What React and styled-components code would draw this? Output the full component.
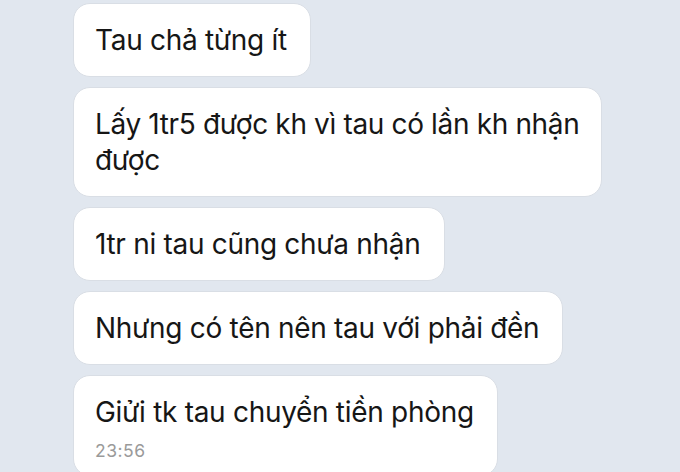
import React from "react";
import styled, { createGlobalStyle } from "styled-components";

const Global = createGlobalStyle`
  html, body {
    margin: 0;
    padding: 0;
    height: 472px;
    overflow: hidden;
    background: #e1e7ef;
  }
  * { box-sizing: border-box; }
`;

const Thread = styled.div`
  display: flex;
  flex-direction: column;
  align-items: flex-start;
  gap: 10px;
  padding: 3px 0 0 73px;
  font-family: Inter, "Noto Sans", sans-serif;
`;

const Bubble = styled.div`
  background: #ffffff;
  border: 1px solid #d9dee5;
  border-radius: 17px;
  padding: 18px 23px 18px 21px;
  max-width: 529px;
  color: #161616;
  font-size: 28px;
  line-height: 36px;
  letter-spacing: -0.3px;
  padding-right: ${(p) => (p.$wide ? "20px" : "23px")};
  letter-spacing: ${(p) => (p.$wide ? "-0.35px" : "-0.3px")};
  padding-bottom: ${(p) => (p.$withTime ? "12px" : "18px")};
`;

const Time = styled.div`
  margin-top: 9px;
  font-size: 17.5px;
  line-height: 24px;
  color: #9a9a9a;
  letter-spacing: 0.5px;
`;

const messages = [
  { text: "Tau chả từng ít" },
  { text: "Lấy 1tr5 được kh vì tau có lần kh nhận được", wide: true },
  { text: "1tr ni tau cũng chưa nhận" },
  { text: "Nhưng có tên nên tau với phải đền" },
];

export default function App() {
  return (
    <>
      <Global />
      <Thread>
        {messages.map((m) => (
          <Bubble key={m.text} $wide={m.wide}>
            {m.text}
          </Bubble>
        ))}
        <Bubble $withTime>
          Giửi tk tau chuyển tiền phòng
          <Time>23:56</Time>
        </Bubble>
      </Thread>
    </>
  );
}
